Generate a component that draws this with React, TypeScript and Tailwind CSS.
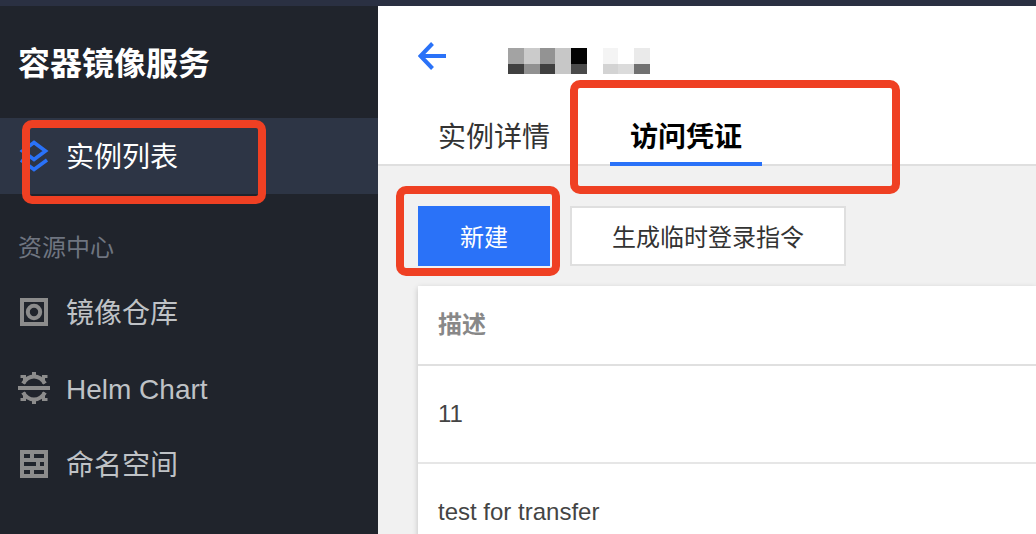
import type { ReactNode } from "react";
import clsx from "clsx";

function StackIcon() {
    return (
        <svg
            className="size-8 shrink-0 text-[#2a72f8]"
            viewBox="0 0 32 32"
            fill="none"
            stroke="currentColor"
            strokeWidth="3.6"
            aria-hidden="true"
        >
            <path d="M16 2.5 27.5 11 16 19.5 4.5 11Z" />
            <path d="M3 20 16 29.5 29 20" />
        </svg>
    );
}

function RegistryIcon() {
    return (
        <svg
            className="size-8 shrink-0 text-[#8c8c8c]"
            viewBox="0 0 32 32"
            fill="none"
            stroke="currentColor"
            strokeWidth="4"
            aria-hidden="true"
        >
            <path d="M4 4H28V28H4Z" />
            <circle cx="16" cy="16" r="6.2" strokeWidth="4" />
        </svg>
    );
}

function HelmIcon() {
    return (
        <svg
            className="size-8 shrink-0 text-[#8c8c8c]"
            viewBox="0 0 32 32"
            fill="none"
            stroke="currentColor"
            strokeWidth="4"
            aria-hidden="true"
        >
            <path d="M0 16H32" />
            <path d="M5 11.5C8 6.5 12 4.5 16 4.5S24 6.5 27 11.5" />
            <path d="M5 20.5C8 25.5 12 27.5 16 27.5S24 25.5 27 20.5" />
            <path d="M16 0V4M16 32V28" />
            <path
                strokeWidth="3"
                d="M2.5 4.5H6.5V11.5M29.5 4.5H25.5V11.5M2.5 27.5H6.5V20.5M29.5 27.5H25.5V20.5"
            />
        </svg>
    );
}

function NamespaceIcon() {
    return (
        <svg
            className="size-8 shrink-0 text-[#8c8c8c]"
            viewBox="0 0 32 32"
            fill="currentColor"
            aria-hidden="true"
        >
            <path
                fillRule="evenodd"
                d="M2 2H30V30H2ZM6 6V10H12V6ZM16 6V10H26V6ZM6 14V18H18V14ZM22 14V18H26V14ZM6 22V26H12V22ZM16 22V26H26V22Z"
            />
        </svg>
    );
}

function BackIcon() {
    return (
        <svg
            className="size-7"
            viewBox="0 0 28 28"
            fill="none"
            stroke="#2a72f8"
            strokeWidth="4"
            aria-hidden="true"
        >
            <path d="M28 14H3M14.5 1.5 2.5 14 14.5 26.5" />
        </svg>
    );
}

const mosaic = [
    ["#a3a3a3", "#cbcbcb", "#939393", "#c7c7c7", "#030303", "#fff", "#f4f4f4", "#fff", "#eaeaea"],
    ["#404040", "#919191", "#404040", "#c7c7c7", "#4a4a4a", "#fff", "#d3d3d3", "#dbdbdb", "#717171"],
];

// The instance name is pixelated
function MaskedName() {
    return (
        <svg
            className="h-[26px] w-[142px]"
            viewBox="0 0 144 26"
            preserveAspectRatio="none"
            shapeRendering="crispEdges"
            aria-hidden="true"
        >
            {mosaic.map((row, y) =>
                row.map((fill, x) => (
                    <rect
                        key={`${x}-${y}`}
                        x={x * 16}
                        y={y * 16}
                        width="16"
                        height={y ? 10 : 16}
                        fill={fill}
                    />
                )),
            )}
        </svg>
    );
}

// Red frame drawn over the control it points at
function Highlight({ className }: { className: string }) {
    return (
        <span
            className={clsx(
                "pointer-events-none absolute z-10 rounded-[10px] border-8 border-[#ef4023]",
                className,
            )}
        />
    );
}

function NavItem({
    icon,
    label,
    active,
    children,
}: {
    icon: ReactNode;
    label: string;
    active?: boolean;
    children?: ReactNode;
}) {
    return (
        <li className="relative">
            <a
                href="#"
                aria-current={active ? "page" : undefined}
                className={clsx(
                    "flex h-[76px] items-center gap-4 px-[18px] text-[28px] leading-9",
                    active ? "bg-[#2d3545] text-white" : "text-[#bfc2c6]",
                )}
            >
                {icon}
                <span className="pt-1">{label}</span>
            </a>
            {children}
        </li>
    );
}

function Sidebar() {
    return (
        <nav className="w-[378px] shrink-0 bg-[#20242c]">
            <h2 className="flex h-28 items-center px-[18px] pt-1 text-[32px] leading-10 font-bold text-white">
                容器镜像服务
            </h2>
            <ul>
                <NavItem icon={<StackIcon />} label="实例列表" active>
                    <Highlight className="top-0.5 left-[22px] h-[84px] w-[244px]" />
                </NavItem>
            </ul>
            <h3 className="px-[18px] pt-9 pb-2 text-2xl leading-9 text-[#6f7580]">
                资源中心
            </h3>
            <ul>
                <NavItem icon={<RegistryIcon />} label="镜像仓库" />
                <NavItem icon={<HelmIcon />} label="Helm Chart" />
                <NavItem icon={<NamespaceIcon />} label="命名空间" />
            </ul>
        </nav>
    );
}

function CredentialTable({ rows }: { rows: string[] }) {
    return (
        <table className="w-full bg-white text-left text-2xl shadow-[0_2px_6px_rgba(0,0,0,0.2)]">
            <thead>
                <tr className="h-[79px] border-b-2 border-[#e0e0e0]">
                    <th className="px-5 font-bold text-[#888]">描述</th>
                </tr>
            </thead>
            <tbody>
                {rows.map((row) => (
                    <tr key={row} className="h-[98px] border-b-2 border-[#e6e6e6]">
                        <td className="px-5 text-[#444]">{row}</td>
                    </tr>
                ))}
            </tbody>
        </table>
    );
}

export default function App() {
    return (
        <div className="flex h-screen flex-col overflow-hidden font-['Liberation_Sans','Noto_Sans_CJK_SC',sans-serif]">
            <div className="h-1.5 shrink-0 bg-[#2a3042]" />
            <div className="flex min-h-0 grow">
                <Sidebar />
                <main className="min-w-0 grow bg-[#f1f1f1]">
                    <header className="border-b-2 border-[#dfdfdf] bg-white pl-10">
                        <div className="flex h-[100px] items-center gap-[62px]">
                            <button type="button" aria-label="返回">
                                <BackIcon />
                            </button>
                            <div className="pt-2.5">
                                <MaskedName />
                            </div>
                        </div>
                        <div
                            role="tablist"
                            className="-mb-0.5 flex gap-10 text-[28px] leading-9"
                        >
                            <button
                                type="button"
                                role="tab"
                                aria-selected="false"
                                className="h-[60px] px-5 pt-1 text-[#333]"
                            >
                                实例详情
                            </button>
                            <div className="relative">
                                <button
                                    type="button"
                                    role="tab"
                                    aria-selected="true"
                                    className="h-[60px] border-b-4 border-[#2a72f8] px-5 pt-2 font-bold text-black"
                                >
                                    访问凭证
                                </button>
                                <Highlight className="-top-[26px] -left-10 h-[114px] w-[330px]" />
                            </div>
                        </div>
                    </header>
                    <div className="pt-10 pl-10">
                        <div className="mb-5 flex gap-5 text-2xl">
                            <div className="relative">
                                <button
                                    type="button"
                                    className="h-[60px] border-2 border-[#2a72f8] bg-[#2a72f8] px-10 pt-1 text-white"
                                >
                                    新建
                                </button>
                                <Highlight className="-top-5 -left-[22px] h-[90px] w-[164px]" />
                            </div>
                            <button
                                type="button"
                                className="h-[60px] border-2 border-[#dfdfdf] bg-white px-10 pt-1 text-[#333]"
                            >
                                生成临时登录指令
                            </button>
                        </div>
                        <CredentialTable rows={["11", "test for transfer"]} />
                    </div>
                </main>
            </div>
        </div>
    );
}
